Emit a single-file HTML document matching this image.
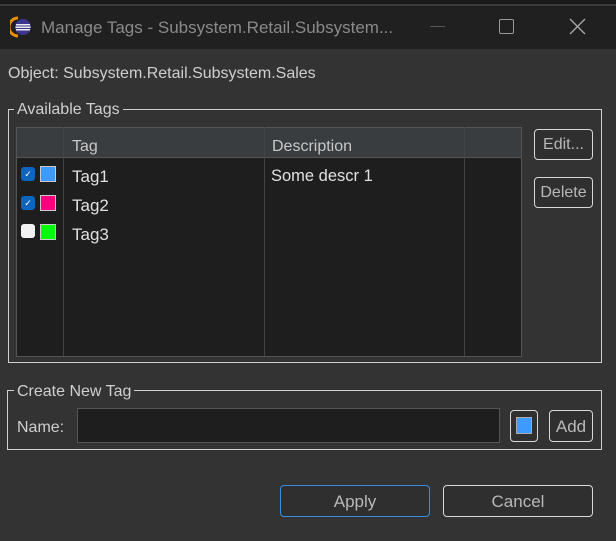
<!DOCTYPE html>
<html><head><style>
*{margin:0;padding:0;box-sizing:border-box}
body{width:616px;height:541px;background:#333333;font-family:"Liberation Sans",sans-serif;color:#d4d4d4;position:relative;overflow:hidden;font-size:16px}
.a{position:absolute}
.btn{position:absolute;border:1.5px solid #d8d8d8;border-radius:4px;color:#b8b8b8;text-align:center;background:#2f2f2f}
.vl{position:absolute;top:127px;height:229px;width:1px;background:#404448}
</style></head><body>
<div class="a" style="left:0;top:0;width:616px;height:5px;background:#1a1a1a"></div>
<div class="a" style="left:0;top:4px;width:616px;height:2px;background:#3a3a3a"></div>
<div class="a" style="left:0;top:6px;width:616px;height:43px;background:#202020"></div>
<svg class="a" style="left:10px;top:15px" width="24" height="24" viewBox="0 0 24 24">
<path d="M8 3 A9 9 0 0 0 8 21" stroke="#e8900a" stroke-width="3" fill="none"/>
<circle cx="13" cy="12" r="8" fill="#3b3590"/>
<rect x="6" y="9" width="14" height="1.5" fill="#eee"/><rect x="5.5" y="11.5" width="15" height="1.5" fill="#eee"/><rect x="6" y="14" width="14" height="1.5" fill="#eee"/>
</svg>
<div class="a" style="left:41px;top:18px;color:#8a8a8a;font-size:17px">Manage Tags - Subsystem.Retail.Subsystem...</div>
<div class="a" style="left:430px;top:26px;width:15px;height:1px;background:#555"></div>
<div class="a" style="left:499px;top:19px;width:15px;height:15px;border:1.5px solid #999;border-radius:2px"></div>
<svg class="a" style="left:569px;top:18px" width="17" height="17"><path d="M1 1L16 16M16 1L1 16" stroke="#aaa" stroke-width="1.3"/></svg>
<div class="a" style="left:8px;top:65px;font-size:16px;color:#cfcfcf">Object: Subsystem.Retail.Subsystem.Sales</div>
<div class="a" style="left:8px;top:109px;width:594px;height:254px;border:1px solid #cfcfcf"></div>
<div class="a" style="left:14px;top:101px;background:#333;padding:0 3px;color:#cfcfcf">Available Tags</div>
<div class="a" style="left:16px;top:127px;width:506px;height:230px;background:#1e1e1e;border:1px solid #555"></div>
<div class="a" style="left:17px;top:128px;width:504px;height:30px;background:#393d40;border-bottom:1px solid #555"></div>
<div class="vl" style="left:63px"></div><div class="vl" style="left:264px"></div><div class="vl" style="left:464px"></div>
<div class="a" style="left:72px;top:138px;color:#c8c8c8">Tag</div>
<div class="a" style="left:272px;top:138px;color:#c8c8c8">Description</div>
<div class="a" style="left:21px;top:167px;width:14px;height:14px;border-radius:3px;background:#0e65c0;color:#fff;font-size:9px;text-align:center;line-height:14px">✓</div>
<div class="a" style="left:40px;top:166px;width:16px;height:16px;background:#3d9bff;border:1px solid #ccc"></div>
<div class="a" style="left:21px;top:196px;width:14px;height:14px;border-radius:3px;background:#0e65c0;color:#fff;font-size:9px;text-align:center;line-height:14px">✓</div>
<div class="a" style="left:40px;top:195px;width:16px;height:16px;background:#ff0080;border:1px solid #ccc"></div>
<div class="a" style="left:21px;top:224px;width:14px;height:14px;border-radius:3px;background:#f2f2f2"></div>
<div class="a" style="left:40px;top:224px;width:16px;height:16px;background:#00ff00;border:1px solid #ccc"></div>
<div class="a" style="left:72px;top:167px;color:#e0e0e0;font-size:17px">Tag1</div>
<div class="a" style="left:72px;top:196px;color:#e0e0e0;font-size:17px">Tag2</div>
<div class="a" style="left:72px;top:225px;color:#e0e0e0;font-size:17px">Tag3</div>
<div class="a" style="left:271px;top:167px;color:#e0e0e0;font-size:16.5px">Some descr 1</div>
<div class="btn" style="left:534px;top:129px;width:59px;height:31px;line-height:30px">Edit...</div>
<div class="btn" style="left:534px;top:177px;width:59px;height:31px;line-height:30px">Delete</div>
<div class="a" style="left:7px;top:390px;width:595px;height:60px;border:1px solid #cfcfcf"></div>
<div class="a" style="left:14px;top:383px;background:#333;padding:0 3px;color:#cfcfcf">Create New Tag</div>
<div class="a" style="left:17px;top:419px;color:#cfcfcf">Name:</div>
<div class="a" style="left:77px;top:408px;width:423px;height:35px;background:#1e1e1e;border:1px solid #555"></div>
<div class="btn" style="left:510px;top:410px;width:28px;height:32px"><div style="margin:6px auto 0;width:16px;height:17px;background:#3d9bff;border:1px solid #aaa"></div></div>
<div class="btn" style="left:549px;top:410px;width:44px;height:32px;line-height:32px;font-size:17px">Add</div>
<div class="btn" style="left:280px;top:485px;width:150px;height:32px;line-height:32px;border-color:#3a8ee0;font-size:17px">Apply</div>
<div class="btn" style="left:443px;top:485px;width:150px;height:32px;line-height:32px;font-size:17px">Cancel</div>
</body></html>
